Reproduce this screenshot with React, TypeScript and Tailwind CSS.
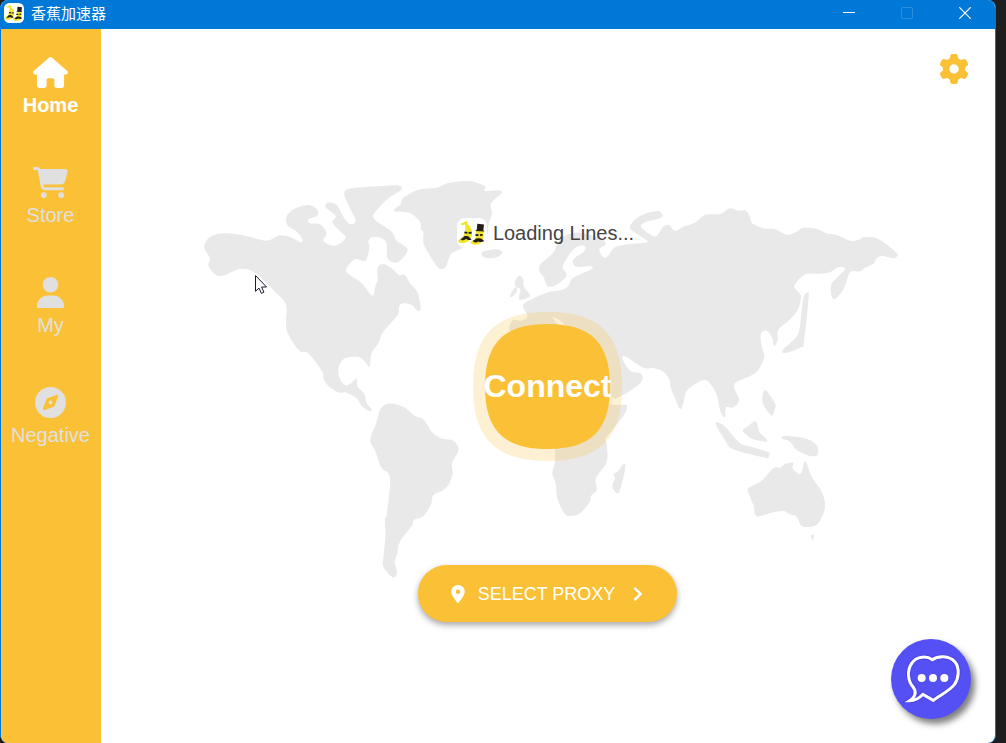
import React from "react";
import { FaChevronRight } from "react-icons/fa";
import { FaCartShopping, FaCompass, FaGear, FaHouse, FaLocationDot, FaUser } from "react-icons/fa6";

type Land = { transform?: string; points: string };

const CROP_NA = "translate(195 170) scale(0.33333)";
const CROP_GL = "translate(340 170) scale(0.33333)";
const CROP_SA = "translate(360 390) scale(0.33333)";
const CROP_EA = "translate(620 195) scale(0.33333)";
const CROP_OC = "translate(700 380) scale(0.33333)";

const lands: Land[] = [
  // North America
  {
    transform: CROP_NA,
    points:
      "28,233 38,207 60,194 95,190 150,197 215,212 255,196 290,203 318,217 322,207 305,185 277,165 275,140 295,118 340,105 368,120 366,138 340,148 345,160 375,163 395,190 385,213 420,227 452,203 435,184 412,157 422,138 392,112 400,97 425,105 445,140 465,162 482,152 465,115 448,70 470,55 560,48 612,47 618,60 580,85 550,115 536,145 590,185 605,212 638,238 612,275 590,275 576,262 575,222 560,205 530,202 520,215 523,230 512,272 480,268 455,295 458,310 500,340 532,377 542,345 548,330 548,293 565,282 590,295 612,315 630,315 645,340 668,368 677,415 668,422 650,405 625,400 612,410 608,435 565,485 550,520 530,550 524,590 510,575 490,561 450,565 430,595 435,628 452,646 468,640 485,626 488,650 508,672 515,700 530,718 523,723 500,708 485,685 455,668 430,667 400,648 385,625 382,605 340,550 312,541 275,480 273,405 240,365 210,335 175,305 135,297 80,318 55,308 40,285 45,265",
  },
  // Greenland
  {
    transform: CROP_GL,
    points:
      "163,118 182,102 188,85 215,68 245,57 290,53 325,39 380,33 410,38 436,49 434,63 475,61 485,70 453,100 456,130 445,165 440,195 395,212 365,235 335,250 325,270 318,290 305,297 290,288 260,240 250,215 250,185 243,180 240,155 215,132 190,125 165,124",
  },
  // Iceland
  { transform: CROP_GL, points: "425,247 445,241 470,238 487,246 478,258 455,265 430,260" },
  // Great Britain and Ireland
  { transform: CROP_GL, points: "535,318 525,335 527,350 541,358 537,388 560,385 570,375 552,350 550,330 543,318" },
  { transform: CROP_GL, points: "526,352 512,372 512,382 522,375 531,362" },
  // Eurasia
  {
    points:
      "539.3,266.7 543,261.7 553,253 558,243 563,237 570,234 580,232.7 600,238 605.7,244 599.3,249.3 603.3,257.3 608,256 615,247.3 630,244 647.3,242.3 643,237.7 630,228.3 636.7,218.3 646.7,213.3 658,211 662.7,215 660,218.3 645,222.3 641,226.7 648.3,233.3 655,236.7 659,233 663.3,226.7 669.3,225 675,231 683.3,226.7 695,222.7 705,215 720,214 730,208.3 738.3,210.7 746,210.7 750,216.7 752.3,223.3 763.3,228.3 775,229.3 786.7,234.7 796.7,231.7 803.3,228 816.7,229 826.7,233.3 836.7,235 850,240.7 858.3,240 865,237 878.3,239 896,252.3 896.7,256.7 893.3,258.3 881.7,256 876,259 873.3,264 865,267.7 860,271.3 850,272.3 844,288.3 835,299 831.3,295 832,283.3 845,269.3 838.3,267.3 830,272.3 820,273.7 806.7,273.7 800,278.3 794.3,286.7 800.7,295 800,303.3 796.7,311.7 788.3,321 778.3,330 777.7,340 774,346 772.3,338.3 766.7,330.7 760.7,334.3 762.3,348.3 764.3,356.7 758.3,370 750,376 736,382.3 734.3,388.3 739,400 733.3,407.3 726,407.3 725,417.3 720.7,411.7 716.7,395 710,383.3 705,380 698.3,382.3 686.7,391 683.3,403.3 680,409 675,398.3 671,388.3 669,378.3 661.7,370.7 653.3,368 643.3,367.7 626.7,357.3 622.3,357.7 626.7,366.7 631.7,371.7 640,373.3 642.7,378.3 638.3,385 620,396.7 610,396 590,370 560,345 530,335 511,331 510,325 513.3,320 521.3,320.7 527,317.5 526.7,313.3 523,306.7 526.7,301.7 546.7,292.7 561.7,290 568.3,286 573,278 591,269.5 590.3,266 577,267 572.5,262 576,257 583,252.5 585.5,248 583,245.5 575,248 567,258 562.5,267 566.5,274.5 562,281 553,286.3 547,286 544,278 539.5,271.5",
  },
  // Africa
  {
    points:
      "611,404.5 617.7,405 626,405 626.7,409 621.7,418.3 606,438 606.7,443.3 606.7,461.7 596,478.3 596.7,490 591,496 590,501.7 580,513.3 570,516 564,512.7 557.3,498.3 555.7,483.3 552.3,473.3 555,461.7 555,449 556,425 590,400",
  },
  // South America
  {
    transform: CROP_SA,
    points:
      "50,95 60,60 75,44 100,41 135,53 165,78 190,88 215,125 240,143 280,152 295,172 292,190 276,220 278,250 265,285 245,303 220,315 212,345 190,378 162,390 155,408 120,455 112,490 104,515 110,540 108,558 95,560 70,530 70,505 76,440 75,385 80,375 90,265 65,235 53,205 45,180 31,150",
  },
  // Madagascar
  { transform: CROP_SA, points: "793,220 795,240 780,300 772,310 757,290 765,265 760,253 775,242" },
  // Japan and the Philippines
  { transform: CROP_EA, points: "560,295 566,305 552,440 540,458 495,474 490,463 530,425 540,390 550,310" },
  { transform: CROP_EA, points: "438,586 465,625 465,640 455,662 430,628 428,600" },
  // Indonesia and New Guinea
  { transform: CROP_OC, points: "47,132 60,130 80,145 120,190 160,202 205,217 207,228 195,233 100,208 75,180" },
  { transform: CROP_OC, points: "128,150 145,138 165,123 173,135 178,155 202,184 160,178 140,165" },
  { transform: CROP_OC, points: "245,175 255,168 290,170 330,180 352,200 352,225 330,228 290,210 270,185" },
  // Australia and Tasmania
  {
    transform: CROP_OC,
    points:
      "145,325 185,302 220,265 240,263 255,252 280,248 278,265 298,282 307,270 312,247 320,250 335,290 365,335 375,370 372,395 355,430 335,440 305,438 290,410 270,403 250,393 215,398 170,409 160,375 148,345",
  },
  { transform: CROP_OC, points: "333,466 342,466 341,475 337,479" },
];

// Closed Catmull-Rom curve through the outline's points.
function outline(points: string): string {
  const p = points.split(" ").map((s) => s.split(",").map(Number));
  const n = p.length;
  const k = 6;
  let d = `M${p[0][0]} ${p[0][1]}`;
  for (let i = 0; i < n; i++) {
    const a = p[(i + n - 1) % n];
    const b = p[i];
    const c = p[(i + 1) % n];
    const e = p[(i + 2) % n];
    d += `C${b[0] + (c[0] - a[0]) / k} ${b[1] + (c[1] - a[1]) / k} ${c[0] - (e[0] - b[0]) / k} ${c[1] - (e[1] - b[1]) / k} ${c[0]} ${c[1]}`;
  }
  return d + "Z";
}

function WorldMap() {
  return (
    <svg
      className="pointer-events-none absolute inset-0 h-full w-full"
      viewBox="101 29 894 714"
      preserveAspectRatio="xMidYMin meet"
      fill="#e9e9e9"
      aria-hidden="true"
    >
      {lands.map((l, i) => (
        <path key={i} transform={l.transform} d={outline(l.points)} />
      ))}
      <path d="M552 317Q559 318 566 326L560 326Q555 322 552 317Z" fill="#fff" />
    </svg>
  );
}

function BananaLogo({ className }: { className: string }) {
  return (
    <svg className={className} viewBox="0 0 30 30" aria-hidden="true">
      <rect width="30" height="30" rx="8" fill="#fff" />
      <path
        d="M3.800 5.800L9.600 3L10.800 4.400L10.400 6C13.500 8.500 15.400 11.500 15 16C14.600 22 9.500 25.800 3.600 25C1.200 24.600 .8 22.600 2.200 21.400C6 20 9 15 8.300 6.400L4.600 7.200Z"
        fill="#efe42a"
      />
      <path
        d="M19 13H26.500C27 19 26.500 25.500 20.500 26.600C17.500 27 14 26.600 13.600 24.600C13.600 23 16 23 17.500 21.500C19.500 19.500 19.400 16.500 19 13Z"
        fill="#efe42a"
      />
      <path d="M20.300 5.800L27 6.400L26.300 12.200L27.800 13.600L18.300 13L19.800 11.600Z" fill="#241d1c" />
      <path
        d="M7.400 14.300L10.400 14.800M11.600 15L14.600 14.700M18.500 17L21.500 17.200M23 17.200L25.600 16.800"
        stroke="#241d1c"
        strokeWidth="1.800"
      />
      <path
        d="M3.400 21C6 20.600 6.500 17.400 9 18C11.500 17.400 12.500 19.500 14.600 21.600C12 22.800 10.500 21.600 9 21C7 22.400 5 23 3.400 21Z"
        fill="#241d1c"
      />
      <path
        d="M15.600 22.800C18 22.600 18.500 19.800 21 20.400C23.500 19.800 25.500 21 27.200 23C25 24.600 23 24 21.200 23.400C19.500 24.800 17 25 15.600 22.800Z"
        fill="#241d1c"
      />
    </svg>
  );
}

function TitleBar() {
  const button = "flex h-full w-[58px] items-center justify-center";
  return (
    <header className="flex h-[29px] shrink-0 items-center bg-[#0078d7] pr-px pb-[3px]">
      <BananaLogo className="ml-[3px] h-5 w-5" />
      <h1 className="ml-[7px] flex-1 font-['Noto_Sans_CJK_SC',sans-serif] text-[15px] leading-5 text-white">
        香蕉加速器
      </h1>
      <button className={button} aria-label="Minimize">
        <svg className="h-3 w-3" viewBox="0 0 12 12" stroke="#fff">
          <path d="M0 5.500H12" />
        </svg>
      </button>
      <button className={button} aria-label="Maximize" disabled>
        <svg className="h-3 w-3" viewBox="0 0 12 12" fill="none" stroke="#2b8fde">
          <rect x=".5" y=".5" width="11" height="11" rx=".8" />
        </svg>
      </button>
      <button className={button} aria-label="Close">
        <svg className="h-3 w-3" viewBox="0 0 12 12" stroke="#fff" strokeWidth="1.200">
          <path d="M.3 .3L11.700 11.700M11.700 .3L.3 11.700" />
        </svg>
      </button>
    </header>
  );
}

const navItems = [
  { label: "Home", Icon: FaHouse, active: true },
  { label: "Store", Icon: FaCartShopping, active: false },
  { label: "My", Icon: FaUser, active: false },
  { label: "Negative", Icon: FaCompass, active: false },
];

function Sidebar() {
  return (
    <nav className="flex w-[100px] shrink-0 flex-col gap-[50px] bg-[#fbc136] pt-7 pr-px">
      {navItems.map(({ label, Icon, active }) => (
        <button
          key={label}
          className={`flex flex-col items-center gap-[5px] text-xl leading-6 ${
            active ? "font-bold text-white" : "text-[#e0e0e0]"
          }`}
        >
          <Icon className="h-[31px] w-[35px]" />
          <span>{label}</span>
        </button>
      ))}
    </nav>
  );
}

function ConnectButton() {
  return (
    <button className="relative flex h-[149px] w-[149px] items-center justify-center">
      <svg className="absolute inset-0 h-full w-full" viewBox="-74.500 -74.500 149 149" fill="#fbc136">
        <path
          opacity=".22"
          d="M-74.500 0C-74.500 -52 -52 -74.500 0 -74.500S74.500 -52 74.500 0S52 74.500 0 74.500S-74.500 52 -74.500 0Z"
        />
        <path d="M-62.500 0C-62.500 -43.700 -43.700 -62.500 0 -62.500S62.500 -43.700 62.500 0S43.700 62.500 0 62.500S-62.500 43.700 -62.500 0Z" />
      </svg>
      <span className="relative pb-0.5 text-[32px] leading-10 font-bold text-white">Connect</span>
    </button>
  );
}

const HEART_BUBBLE =
  "M218 119C203 108 171 107 157 129C140 152 145 184 161 202C172 217 166 232 150 242C165 242 179 235 190 223L221 241C240 226 268 214 284 194C297 176 301 144 286 126C268 106 236 107 218 119Z";

function ChatButton() {
  return (
    <button
      className="absolute right-6 bottom-6 h-20 w-20 rounded-full bg-[#5450f3] shadow-[4px_5px_6px_rgba(0,0,0,0.5)]"
      aria-label="Chat"
    >
      <svg className="h-full w-full" viewBox="94 57 240 240" fill="none">
        <path d={HEART_BUBBLE} stroke="#3b34cf" strokeWidth="14" opacity=".5" />
        <path d={HEART_BUBBLE} stroke="#fff" strokeWidth="9" />
        <g fill="#fff">
          <circle cx="186" cy="174" r="12" />
          <circle cx="220" cy="174" r="12" />
          <circle cx="254" cy="174" r="12" />
        </g>
      </svg>
    </button>
  );
}

function Cursor() {
  return (
    <svg
      className="pointer-events-none absolute top-[274px] left-[254px] h-5 w-[14px]"
      viewBox="0 0 14 20"
      aria-hidden="true"
    >
      <path
        d="M1.500 1.500V17.300L5 14.100L7.400 19.300L9.900 18.200L7.600 13H12.500Z"
        fill="#fff"
        stroke="#1a1a2a"
        strokeWidth="1"
      />
    </svg>
  );
}

export default function App() {
  return (
    <div className="relative min-h-screen bg-[#1e1e1e] pr-[10px] font-['Liberation_Sans',Arial,sans-serif]">
      <div className="flex min-h-screen flex-col overflow-hidden rounded-lg border-x border-[#0078d7] bg-white">
        <TitleBar />
        <div className="flex flex-1">
          <Sidebar />
          <main className="relative flex flex-1 flex-col">
            <WorldMap />
            <div className="relative flex justify-end px-[26px] pt-[25px]">
              <button aria-label="Settings" className="text-[#fbc136]">
                <FaGear className="h-[30px] w-[30px]" />
              </button>
            </div>
            <div className="relative flex flex-col items-center pt-[134px] pr-px">
              <div className="flex items-center gap-1.5 pr-1" role="status">
                <BananaLogo className="h-[30px] w-[30px]" />
                <span className="text-xl leading-6 text-[#444]">Loading Lines...</span>
              </div>
              <div className="mt-16 mb-[104px]">
                <ConnectButton />
              </div>
              <button className="flex h-[57px] items-center rounded-full bg-[#fbc136] px-[31px] text-lg text-white shadow-[0_3px_6px_rgba(0,0,0,0.35)]">
                <FaLocationDot className="h-[18px] w-[18px]" />
                <span className="mr-[15px] ml-[11px]">SELECT PROXY</span>
                <FaChevronRight className="h-4 w-4" />
              </button>
            </div>
            <ChatButton />
          </main>
        </div>
      </div>
      <Cursor />
    </div>
  );
}
